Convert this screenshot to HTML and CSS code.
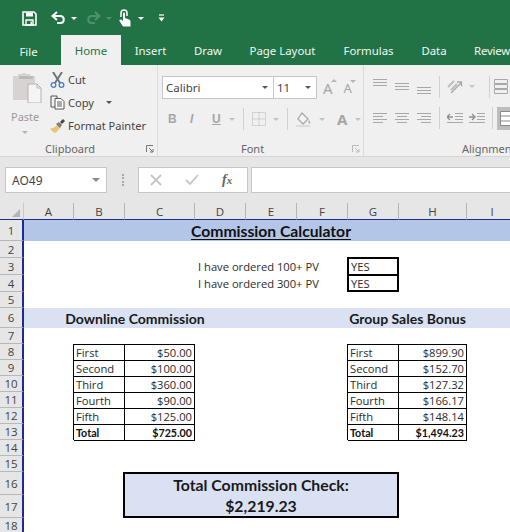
FILE: index.html
```html
<!DOCTYPE html>
<html lang="en">
<head>
<meta charset="utf-8">
<title>Commission Calculator</title>
<link rel="stylesheet" href="styles.css">
</head>
<body>
<div class="app">
  <header class="titlebar">
    <svg class="qa-save" width="15" height="15" viewBox="0 0 15 15"><path d="M1 1h11l2 2v11H1z" fill="none" stroke="#fff" stroke-width="1.6"/><path d="M4 1.500h7v4H4z" fill="#fff"/><path d="M4 9h7v5H4z" fill="none" stroke="#fff" stroke-width="1.4"/><path d="M8.500 10.500h1.600v3H8.500z" fill="#fff"/></svg>
    <svg class="qa-undo" width="15" height="14" viewBox="0 0 15 14"><path d="M6 1 1.500 5 6 9" fill="none" stroke="#fff" stroke-width="2"/><path d="M2 5h7c5 0 5 7 0 7H6" fill="none" stroke="#fff" stroke-width="2"/></svg>
    <span class="caret-w"></span>
    <svg class="qa-redo" width="15" height="14" viewBox="0 0 15 14"><path d="M9 1l4.500 4L9 9" fill="none" stroke="#4f9270" stroke-width="2"/><path d="M13 5H6c-5 0-5 7 0 7h3" fill="none" stroke="#4f9270" stroke-width="2"/></svg>
    <span class="caret-d"></span>
    <svg class="qa-touch" width="13" height="18" viewBox="0 0 13 18"><path d="M3 8V4a3 3 0 0 1 6 0v3" fill="none" stroke="#fff" stroke-width="1.500"/><path d="M5 4.500a1 1 0 0 1 2 0V9l4 1.500c1.500.6 1.500 1.500 1.500 2.500v4.500H5L1.500 12c-.6-1 .8-2 2-1.200L5 12z" fill="#fff"/></svg>
    <span class="caret-w"></span>
    <svg class="qa-more" width="7" height="8" viewBox="0 0 7 8"><path d="M1 1h5" stroke="#fff" stroke-width="1.200"/><path d="M.5 3.500h6L3.500 7.500z" fill="#fff"/></svg>
  </header>

  <nav class="tabs">
    <span class="tab tab-file">File</span>
    <span class="tab tab-home">Home</span>
    <span class="tab tab-insert">Insert</span>
    <span class="tab tab-draw">Draw</span>
    <span class="tab tab-layout">Page Layout</span>
    <span class="tab tab-formulas">Formulas</span>
    <span class="tab tab-data">Data</span>
    <span class="tab tab-review">Review</span>
  </nav>

  <section class="ribbon">
    <div class="group group-clip">
      <div class="group-body clip-body">
        <div class="paste">
          <svg width="30" height="30" viewBox="0 0 30 30"><path d="M1 3h5V1h4v-1h4v1h4v2h5v24H1z" fill="#d7d3d3"/><path d="M7 3h14v3H7z" fill="#bdb9b9"/><path d="M16 11h9l4 4v15H16z" fill="#f6f5f5" stroke="#b5b2b2"/><path d="M25 11v4h4" fill="none" stroke="#b5b2b2"/></svg>
          <span class="paste-label">Paste</span>
          <span class="caret-g"></span>
        </div>
        <ul class="clip-list">
          <li class="clip-item">
            <svg width="15" height="16" viewBox="0 0 15 16"><path d="M3 0l7 11M12 0 5 11" stroke="#70757d" stroke-width="2"/><circle cx="3.500" cy="13" r="2.300" fill="none" stroke="#3f7fc1" stroke-width="1.300"/><circle cx="11.500" cy="13" r="2.300" fill="none" stroke="#3f7fc1" stroke-width="1.300"/></svg>
            <span>Cut</span>
          </li>
          <li class="clip-item">
            <svg width="15" height="15" viewBox="0 0 15 15"><path d="M1 1h6v2.500M5 12H1V1" fill="none" stroke="#555" stroke-width="1"/><path d="M5 3.500h6l3 3V14H5z" fill="#fff" stroke="#555"/><path d="M7 7h5M7 9h5M7 11h5" stroke="#555"/></svg>
            <span>Copy</span>
            <span class="caret-k"></span>
          </li>
          <li class="clip-item">
            <svg width="15" height="14" viewBox="0 0 15 14"><path d="M0 9c3 1 5-1 7-3l3 3c-2 2-3 4-5 5-2-.5-4-3-5-5z" fill="#ecc27a"/><path d="M6 5l3-2 3 3-2 3z" fill="#7b7b7b"/><path d="M10 3l3-3 2 2-3 3z" fill="#444"/></svg>
            <span>Format Painter</span>
          </li>
        </ul>
      </div>
      <footer class="group-foot foot-clip"><span>Clipboard</span>
        <svg class="launch" width="8" height="8" viewBox="0 0 8 8"><path d="M.5 7V.5H7M3 3l4 4M4 7h3V4" fill="none" stroke="#777"/></svg>
      </footer>
    </div>

    <div class="group group-font">
      <div class="group-body font-body">
        <div class="font-row">
          <div class="combo combo-name"><span>Calibri</span><span class="caret-k"></span></div>
          <div class="combo combo-size"><span>11</span><span class="caret-k"></span></div>
          <span class="grow-a">A<i class="up"></i></span>
          <span class="shrink-a">A<i class="dn"></i></span>
        </div>
        <div class="font-row row-format">
          <b class="fmt fmt-b">B</b>
          <i class="fmt fmt-i">I</i>
          <u class="fmt fmt-u">U</u>
          <span class="caret-l"></span>
          <span class="vsep"></span>
          <svg width="14" height="14" viewBox="0 0 14 14"><path d="M.5.5h13v13H.5zM7 .5v13M.5 7h13" fill="none" stroke="#b5b5b5" stroke-dasharray="1 1"/></svg>
          <span class="caret-l"></span>
          <span class="vsep"></span>
          <svg width="16" height="15" viewBox="0 0 16 15"><path d="M6 1l6 6-5 5-5-5z" fill="#f4f4f4" stroke="#a9a9a9" stroke-width="1.300"/><path d="M13 8c1 1.500 2 3 .8 3.600S12 10 13 8z" fill="#a9a9a9"/><path d="M0 13h14v2H0z" fill="#dcdcdc"/></svg>
          <span class="caret-l"></span>
          <span class="font-color">A</span>
          <span class="caret-l"></span>
        </div>
      </div>
      <footer class="group-foot foot-font"><span>Font</span>
        <svg class="launch" width="8" height="8" viewBox="0 0 8 8"><path d="M.5 7V.5H7M3 3l4 4M4 7h3V4" fill="none" stroke="#bbb"/></svg>
      </footer>
    </div>

    <div class="group group-align">
      <div class="group-body align-body">
        <div class="align-row row-top">
          <svg class="al" width="14" height="17" viewBox="0 0 14 17"><path d="M0 1.500h14M0 4.500h14M0 7.500h14" stroke="#a8a8a8"/></svg>
          <svg class="al" width="14" height="17" viewBox="0 0 14 17"><path d="M0 5.500h14M0 8.500h14M0 11.500h14" stroke="#a8a8a8"/></svg>
          <svg class="al" width="14" height="17" viewBox="0 0 14 17"><path d="M0 9.500h14M0 12.500h14M0 15.500h14" stroke="#a8a8a8"/></svg>
          <span class="vsep"></span>
          <svg class="wide" width="16" height="16" viewBox="0 0 16 16"><path d="M4 14 14 4M10 3h4.500v4.500" fill="none" stroke="#a8a8a8" stroke-width="1.300"/><path d="M1 8l6-6M4 11l6-6" stroke="#bcbcbc" stroke-width="2"/></svg>
          <span class="caret-l"></span>
          <span class="vsep vsep-r"></span>
          <svg class="wrap" width="14" height="15" viewBox="0 0 14 15"><path d="M.5.5h13v4H.5zM.5 5.500h13v4H.5zM.5 10.500h13v4H.5z" fill="none" stroke="#a8a8a8"/></svg>
        </div>
        <div class="align-row row-bottom">
          <svg class="al" width="14" height="11" viewBox="0 0 14 11"><path d="M0 .5h14M0 3.500h10M0 6.500h14M0 9.500h10" stroke="#a8a8a8"/></svg>
          <svg class="al" width="14" height="11" viewBox="0 0 14 11"><path d="M0 .5h14M2 3.500h10M0 6.500h14M2 9.500h10" stroke="#a8a8a8"/></svg>
          <svg class="al" width="14" height="11" viewBox="0 0 14 11"><path d="M0 .5h14M4 3.500h10M0 6.500h14M4 9.500h10" stroke="#a8a8a8"/></svg>
          <span class="vsep"></span>
          <svg class="wide" width="16" height="11" viewBox="0 0 16 11"><path d="M8 .5h8M8 3.500h8M8 6.500h8M0 9.500h16" stroke="#a8a8a8"/><path d="M0 4h6M3 1 0 4l3 3" fill="none" stroke="#8e8e8e" stroke-width="1.300"/></svg>
          <svg class="wide" width="16" height="11" viewBox="0 0 16 11"><path d="M8 .5h8M8 3.500h8M8 6.500h8M0 9.500h16" stroke="#a8a8a8"/><path d="M0 4h6M3 1l3 3-3 3" fill="none" stroke="#8e8e8e" stroke-width="1.300"/></svg>
          <span class="vsep vsep-b"></span>
          <span class="merge-on"><svg width="13" height="15" viewBox="0 0 13 15"><path d="M.5.5h13v14H.5zM.5 5h13M.5 10h13" fill="#fff" stroke="#8a8a8a"/></svg></span>
        </div>
      </div>
      <footer class="group-foot foot-align"><span>Alignment</span></footer>
    </div>
  </section>

  <section class="formula">
    <div class="namebox"><span>AO49</span><span class="caret-m"></span></div>
    <span class="grip"></span>
    <div class="fxbox">
      <svg width="12" height="12" viewBox="0 0 12 12"><path d="M1 1l10 10M11 1 1 11" stroke="#c6c6c6" stroke-width="1.800"/></svg>
      <svg width="14" height="12" viewBox="0 0 14 12"><path d="M1 6l4 4 8-9" fill="none" stroke="#c6c6c6" stroke-width="1.800"/></svg>
      <span class="fx">f<small>x</small></span>
    </div>
    <div class="fxinput"></div>
  </section>

  <main class="sheet">
    <div class="corner"><span></span></div>
    <div class="col">A</div><div class="col">B</div><div class="col">C</div><div class="col">D</div><div class="col">E</div><div class="col">F</div><div class="col">G</div><div class="col">H</div><div class="col">I</div>

    <div class="row r1">1</div><div class="row r2">2</div><div class="row r3">3</div><div class="row r4">4</div><div class="row r5">5</div><div class="row r6">6</div><div class="row r7">7</div><div class="row r8">8</div><div class="row r9">9</div><div class="row r10">10</div><div class="row r11">11</div><div class="row r12">12</div><div class="row r13">13</div><div class="row r14">14</div><div class="row r15">15</div><div class="row r16">16</div><div class="row r17">17</div><div class="row r18">18</div>

    <div class="title"><span>Commission Calculator</span></div>
    <div class="ordered o1">I have ordered 100+ PV</div>
    <div class="ordered o2">I have ordered 300+ PV</div>
    <div class="yesbox">
      <div class="yes">YES</div>
      <div class="yes">YES</div>
    </div>

    <div class="band"></div>
    <div class="band-title band-down">Downline Commission</div>
    <div class="band-title band-group">Group Sales Bonus</div>

    <div class="ctable t-down">
      <div class="k">First</div><div class="v">$50.00</div>
      <div class="k">Second</div><div class="v">$100.00</div>
      <div class="k">Third</div><div class="v">$360.00</div>
      <div class="k">Fourth</div><div class="v">$90.00</div>
      <div class="k">Fifth</div><div class="v">$125.00</div>
      <div class="k tot">Total</div><div class="v tot">$725.00</div>
    </div>

    <div class="ctable t-group">
      <div class="k">First</div><div class="v">$899.90</div>
      <div class="k">Second</div><div class="v">$152.70</div>
      <div class="k">Third</div><div class="v">$127.32</div>
      <div class="k">Fourth</div><div class="v">$166.17</div>
      <div class="k">Fifth</div><div class="v">$148.14</div>
      <div class="k tot">Total</div><div class="v tot">$1,494.23</div>
    </div>

    <div class="check">
      <div>Total Commission Check:</div>
      <div>$2,219.23</div>
    </div>
  </main>
</div>
</body>
</html>
```
FILE: styles.css
```css
* { box-sizing: border-box; }
html, body { margin: 0; padding: 0; }
body { width: 510px; height: 532px; overflow: hidden; background: #fff; font-family: "Noto Sans", "Open Sans", sans-serif; }
.app { width: 510px; height: 532px; overflow: hidden; display: flex; flex-direction: column; }

/* carets */
.caret-w, .caret-d, .caret-g, .caret-k, .caret-l, .caret-m { display: inline-block; width: 0; height: 0; border-style: solid; border-color: transparent; border-width: 3px 3px 0 3px; flex: none; }
.caret-w { border-top-color: #fff; }
.caret-d { border-top-color: #4f9270; }
.caret-g { border-top-color: #b5b5b5; }
.caret-k { border-top-color: #555; }
.caret-l { border-top-color: #c2c2c2; }
.caret-m { border-top-color: #8a8a8a; border-width: 4px 4px 0 4px; }

/* title bar */
.titlebar { height: 35px; flex: none; background: #217346; display: flex; align-items: center; padding: 1px 0 0 22px; }
.titlebar svg, .titlebar span { flex: none; }
.qa-undo { margin-left: 14px; }
.titlebar .qa-undo + .caret-w { margin-left: 5px; }
.qa-redo { margin-left: 9px; }
.titlebar .caret-d { margin-left: 5px; }
.qa-touch { margin-left: 6px; }
.qa-touch + .caret-w { margin-left: 7px; }
.qa-more { margin-left: 14px; }

/* tabs */
.tabs { height: 30px; flex: none; background: #217346; display: flex; overflow: hidden; }
.tab { flex: none; display: flex; align-items: center; justify-content: center; color: #f2f6f3; font-size: 11.400px; height: 30px; white-space: nowrap; }
.tab-file { width: 61px; padding-right: 4px; padding-top: 2px; }
.tab-home { width: 60px; background: #f0f0f0; color: #217346; }
.tab-insert { width: 59px; }
.tab-draw { width: 56px; }
.tab-layout { width: 93px; }
.tab-formulas { width: 79px; }
.tab-data { width: 52px; }
.tab-review { width: 50px; justify-content: flex-start; padding-left: 14px; letter-spacing: -.2px; }

/* ribbon */
.ribbon { height: 92px; flex: none; background: #f0f0f0; border-bottom: 1px solid #d5d5d5; display: flex; overflow: hidden; }
.group { flex: none; height: 91px; display: flex; flex-direction: column; border-right: 1px solid #dcdcdc; }
.group-clip { width: 158px; }
.group-font { width: 206px; }
.group-align { width: 146px; border-right: 0; overflow: hidden; }
.group-body { height: 75px; flex: none; }
.group-foot { height: 16px; flex: none; display: flex; align-items: center; font-size: 11px; color: #666; position: relative; }
.group-foot span { display: block; }
.launch { position: absolute; right: 3px; top: 5px; }
.foot-clip { padding-left: 45px; }
.foot-font { padding-left: 83px; }
.foot-align { padding-left: 98px; }

.clip-body { display: flex; }
.paste { width: 50px; padding: 8px 0 0 12px; display: flex; flex-direction: column; }
.paste svg { flex: none; }
.paste-label { font-size: 11px; color: #9a9a9a; margin: 6px 0 0 -1px; line-height: 16px; }
.paste .caret-g { margin: 6px 0 0 10px; }
.clip-list { list-style: none; margin: 0; padding: 3px 0 0; display: flex; flex-direction: column; gap: 0; }
.clip-item { height: 23px; display: flex; align-items: center; gap: 3px; font-size: 11.100px; color: #444; white-space: nowrap; }
.clip-item svg { flex: none; }
.clip-item .caret-k { margin-left: 9px; }

.font-body { padding: 11px 0 0 4px; display: flex; flex-direction: column; }
.font-row { display: flex; align-items: center; }
.combo { height: 23px; background: #fff; border: 1px solid #c6c6c6; display: flex; align-items: center; justify-content: space-between; font-size: 11.500px; color: #444; padding: 0 5px 0 3px; }
.combo-name { width: 111px; border-right: 0; }
.combo-size { width: 44px; }
.grow-a, .shrink-a { font-size: 13px; color: #a6a6a6; position: relative; }
.grow-a { margin-left: 6px; font-size: 15px; }
.shrink-a { margin-left: 11px; }
.up, .dn { position: absolute; right: -4px; top: 1px; border-style: solid; border-color: transparent; }
.up { border-width: 0 3px 3px 3px; border-bottom-color: #b5b5b5; }
.dn { border-width: 3px 3px 0 3px; border-top-color: #b5b5b5; }
.row-format { margin-top: 8px; height: 24px; padding-left: 6px; }
.fmt { font-family: "Liberation Sans", sans-serif; color: #a6a6a6; font-size: 12px; width: 22px; text-align: left; }
.fmt-b { font-weight: 700; }
.fmt-i { font-weight: 700; }
.fmt-u { font-weight: 700; width: 16px; }
.vsep { display: block; width: 1px; height: 22px; background: #d0d0d0; flex: none; margin: 0 8px; }
.row-format > .caret-l { margin-left: 1px; }
.row-format svg { flex: none; }
.row-format > svg + .caret-l { margin-left: 7px; }
.font-color { font-weight: 700; font-size: 15px; color: #a6a6a6; margin-left: 12px; }
.row-format > .font-color + .caret-l { margin-left: 8px; }

.align-body { padding: 13px 0 0 9px; display: flex; flex-direction: column; }
.align-row { display: flex; align-items: center; }
.align-row svg { flex: none; }
.row-top { height: 17px; }
.row-bottom { height: 22px; margin-top: 12px; }
.al + .al { margin-left: 8px; }
.wide + .wide { margin-left: 6px; }
.align-row .vsep { margin: 0 7px 0 8px; }
.align-row .vsep-r { margin: 0 4px 0 14px; }
.align-row .vsep-b { margin: 0 4px 0 7px; }
.row-top .caret-l { margin-left: 6px; }
.merge-on { width: 20px; height: 23px; background: #bdbdbd; display: flex; align-items: center; padding-left: 3px; flex: none; }

/* formula bar */
.formula { height: 46px; flex: none; background: #e6e6e6; display: flex; align-items: flex-start; padding: 10px 0 0 5px; }
.namebox { width: 102px; height: 26px; background: #fff; border: 1px solid #c6c6c6; display: flex; align-items: center; justify-content: space-between; padding: 0 6px; font-size: 12px; color: #444; flex: none; }
.grip { width: 2px; height: 12px; margin: 7px 14px 0 15px; flex: none; border-left: 2px dotted #a8a8a8; }
.fxbox { width: 110px; height: 26px; background: #fff; border: 1px solid #c6c6c6; display: flex; align-items: center; padding-left: 11px; flex: none; }
.fxbox svg { flex: none; }
.fxbox svg + svg { margin-left: 23px; }
.fx { font-family: "Liberation Serif", serif; font-style: italic; font-weight: 700; font-size: 14px; color: #666; margin-left: 23px; }
.fx small { font-size: 11px; }
.fxinput { flex: 1; height: 26px; margin-left: 3px; background: #fff; border: 1px solid #c6c6c6; border-right: 0; }

/* sheet */
.sheet { flex: none; height: 329px; width: 510px; overflow: hidden; display: grid; grid-template-columns: 24px 50px 51px 70px 51px 51px 51px 51px 68px 51px; grid-template-rows: 17px 21px 17px 17px 17px 16px 20px 16px repeat(6, 16px) 16px 16px 23px 23px 16px; font-family: "Open Sans", sans-serif; background: #fff; color: #2b2b2b; }
.corner { grid-column: 1; grid-row: 1; background: #e6e6e6; border-bottom: 1px solid #1f2b8f; border-right: 1px solid #c8c8c8; position: relative; }
.corner span { position: absolute; right: 3px; bottom: 2px; width: 0; height: 0; border-style: solid; border-width: 0 0 8px 8px; border-color: transparent transparent #b4b4b4 transparent; }
.col { grid-row: 1; background: #e6e6e6; border-bottom: 1px solid #1f2b8f; border-right: 1px solid #b5b5b5; display: flex; align-items: center; justify-content: center; font-size: 11.500px; color: #444; }
.row { grid-column: 1; background: #e6e6e6; border-right: 2px solid #1f2b8f; border-bottom: 1px solid #b8b8b8; display: flex; align-items: center; justify-content: center; font-size: 11.500px; color: #444; }
.r1 { grid-row: 2; } .r2 { grid-row: 3; } .r3 { grid-row: 4; } .r4 { grid-row: 5; } .r5 { grid-row: 6; } .r6 { grid-row: 7; }
.r7 { grid-row: 8; } .r8 { grid-row: 9; } .r9 { grid-row: 10; } .r10 { grid-row: 11; } .r11 { grid-row: 12; } .r12 { grid-row: 13; }
.r13 { grid-row: 14; } .r14 { grid-row: 15; } .r15 { grid-row: 16; } .r16 { grid-row: 17; } .r17 { grid-row: 18; } .r18 { grid-row: 19; }

.title { grid-column: 2 / 11; grid-row: 2; background: #b4c6e7; display: flex; align-items: center; justify-content: center; font-family: Lato, sans-serif; font-weight: 700; font-size: 15.700px; color: #111; }
.title span { text-decoration: underline; text-underline-offset: 2px; text-decoration-thickness: 1px; }
.ordered { grid-column: 5 / 8; display: flex; align-items: center; padding-left: 3px; font-size: 11.200px; white-space: nowrap; }
.o1 { grid-row: 4; }
.o2 { grid-row: 5; }
.yesbox { grid-column: 8; grid-row: 4 / 6; border: 2px solid #000; display: grid; grid-template-rows: 1fr 1fr; margin: -1px 0 0 -1px; }
.yes { display: flex; align-items: center; padding-left: 2px; font-size: 11.200px; }
.yes + .yes { border-top: 2px solid #000; }

.band { grid-column: 2 / 11; grid-row: 7; background: #d9e1f2; }
.band-title { grid-row: 7; display: flex; align-items: center; justify-content: center; font-family: Lato, sans-serif; font-weight: 700; font-size: 14px; color: #1a1a1a; white-space: nowrap; }
.band-down { grid-column: 2 / 6; }
.band-group { grid-column: 8 / 10; }

.ctable { grid-row: 9 / 15; margin-left: -1px; display: grid; grid-template-columns: 51px 1fr; grid-auto-rows: 16px; border-top: 1px solid #000; border-left: 1px solid #000; font-size: 11.200px; }
.t-down { grid-column: 3 / 5; }
.t-group { grid-column: 8 / 10; }
.k, .v { border-right: 1px solid #000; border-bottom: 1px solid #000; display: flex; align-items: center; white-space: nowrap; height: 16px; }
.k { padding-left: 2px; }
.v { justify-content: flex-end; padding-right: 2px; }
.ctable .tot { font-family: Lato, sans-serif; font-weight: 700; font-size: 10.700px; color: #111; }

.check { grid-column: 4 / 9; grid-row: 17 / 19; margin-left: -2px; border: 2px solid #000; background: #d9e1f2; display: grid; grid-template-rows: 1fr 1fr; font-family: Lato, sans-serif; font-weight: 700; font-size: 15.800px; color: #1a1a1a; }
.check div { display: flex; align-items: center; justify-content: center; }
```
